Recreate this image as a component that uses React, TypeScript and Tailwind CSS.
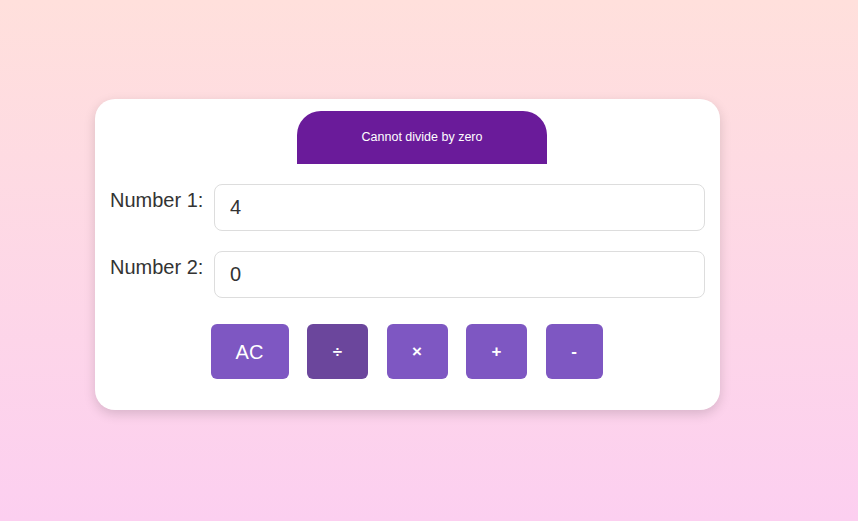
import { useState } from 'react'

const ops = [
  { label: '÷', w: 'w-[61px]', active: true },
  { label: '×', w: 'w-[61px]', active: false },
  { label: '+', w: 'w-[61px]', active: false },
  { label: '-', w: 'w-[57px]', active: false },
]

export default function App() {
  const [a, setA] = useState('4')
  const [b, setB] = useState('0')

  return (
    <div
      className="min-h-[521px] w-full bg-gradient-to-b from-[#ffe0dc] to-[#fccff0] pt-[99px] pl-[95px]"
      style={{ fontFamily: '"Liberation Sans", Arial, sans-serif' }}
    >
      <div className="w-[625px] rounded-[20px] bg-white px-[15px] pt-[12px] pb-[31px] shadow-[0_4px_12px_rgba(0,0,0,0.15)]">
        <div className="flex justify-center pl-[29px]">
          <div className="flex h-[53px] w-[250px] items-center justify-center rounded-t-[24px] bg-[#6a1b9a] pb-[1px] text-[12.5px] text-white">
            Cannot divide by zero
          </div>
        </div>

        <div className="mt-[20px] flex items-start">
          <label className="w-[104px] pt-[1px] text-[20px] text-[#333]">Number 1:</label>
          <input
            value={a}
            onChange={e => setA(e.target.value)}
            className="h-[47px] flex-1 rounded-[8px] border border-[#ddd] px-[15px] text-[20px] text-[#333] outline-none"
          />
        </div>

        <div className="mt-[20px] flex items-start">
          <label className="w-[104px] pt-[1px] text-[20px] text-[#333]">Number 2:</label>
          <input
            value={b}
            onChange={e => setB(e.target.value)}
            className="h-[47px] flex-1 rounded-[8px] border border-[#ddd] px-[15px] text-[20px] text-[#333] outline-none"
          />
        </div>

        <div className="mt-[26px] flex justify-center gap-[18.5px] pr-[2px]">
          <button
            onClick={() => { setA(''); setB('') }}
            className="h-[55px] w-[78px] rounded-[6px] bg-[#7e57c2] text-[20px] text-white"
          >
            AC
          </button>
          {ops.map(op => (
            <button
              key={op.label}
              className={`h-[55px] ${op.w} rounded-[6px] text-[17px] font-bold text-white ${op.active ? 'bg-[#6b469c]' : 'bg-[#7e57c2]'}`}
            >
              {op.label}
            </button>
          ))}
        </div>
      </div>
    </div>
  )
}
